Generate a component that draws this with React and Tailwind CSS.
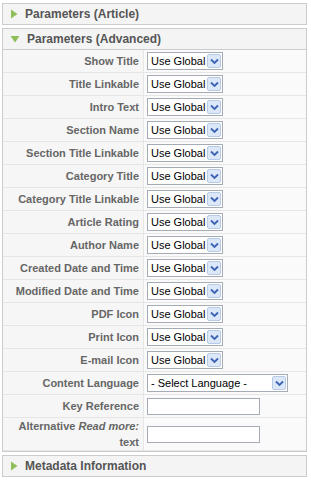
import React from "react";

const Right = () => (
  <svg width="8" height="10" viewBox="0 0 8 10" className="shrink-0">
    <path d="M1 0.5 L7.5 5 L1 9.5 Z" fill="#8fbf5a" />
  </svg>
);
const Down = () => (
  <svg width="10" height="8" viewBox="0 0 10 8" className="shrink-0">
    <path d="M0.5 1 L9.5 1 L5 7.5 Z" fill="#8fbf5a" />
  </svg>
);

const Arrow = () => (
  <span className="flex h-[14px] w-[14px] items-center justify-center rounded-[2px] border border-[#b8cbe6] bg-[#dce7f7]">
    <svg width="9" height="7" viewBox="0 0 9 7">
      <path d="M1 1.5 L4.5 5 L8 1.5" fill="none" stroke="#3c63b5" strokeWidth="1.8" />
    </svg>
  </span>
);

const Select = ({ text, w = "w-[76px]" }) => (
  <div className={`flex h-[18px] ${w} items-center justify-between border border-[#a5acb5] bg-white pl-[3px] pr-[1px] text-[11px] text-black`}>
    <span>{text}</span>
    <Arrow />
  </div>
);

const labels = [
  "Show Title",
  "Title Linkable",
  "Intro Text",
  "Section Name",
  "Section Title Linkable",
  "Category Title",
  "Category Title Linkable",
  "Article Rating",
  "Author Name",
  "Created Date and Time",
  "Modified Date and Time",
  "PDF Icon",
  "Print Icon",
  "E-mail Icon",
];

const Row = ({ label, children, h = "h-[23px]" }) => (
  <div className={`flex ${h} border-b border-[#e6e6e6]`}>
    <div className="flex w-[141px] shrink-0 items-center justify-end border-r border-[#e6e6e6] bg-[#f6f6f6] pr-[4px] text-right text-[11px] font-bold leading-[16px] text-[#666]">
      {label}
    </div>
    <div className="flex flex-1 items-center pl-[3px]">{children}</div>
  </div>
);

const Header = ({ open, title }) => (
  <div className="flex h-[20px] items-center gap-[7px] bg-[#f4f4f4] pl-[7px] text-[12px] font-bold text-[#555]">
    {open ? <Down /> : <Right />}
    <span>{title}</span>
  </div>
);

export default function App() {
  return (
    <div className="h-[480px] w-[311px] bg-white pl-[2px] pr-[4px] pt-[3px] font-['Liberation_Sans',Arial,sans-serif]">
      <div className="border border-[#ccc]">
        <Header title="Parameters (Article)" />
      </div>
      <div className="mt-[3px] border border-[#ccc]">
        <div className="border-b border-[#ccc]">
          <Header open title="Parameters (Advanced)" />
        </div>
        <div className="bg-[#fafafa]">
          {labels.map((l) => (
            <Row key={l} label={l}>
              <Select text="Use Global" />
            </Row>
          ))}
          <Row label="Content Language">
            <Select text="- Select Language -" w="w-[141px]" />
          </Row>
          <Row label="Key Reference">
            <div className="h-[17px] w-[113px] border border-[#a5acb5] bg-white" />
          </Row>
          <Row label={<span>Alternative <i>Read more:</i><br />text</span>} h="h-[33px]">
            <div className="h-[17px] w-[113px] border border-[#a5acb5] bg-white" />
          </Row>
        </div>
      </div>
      <div className="mt-[3px] border border-[#ccc]">
        <Header title="Metadata Information" />
      </div>
    </div>
  );
}
